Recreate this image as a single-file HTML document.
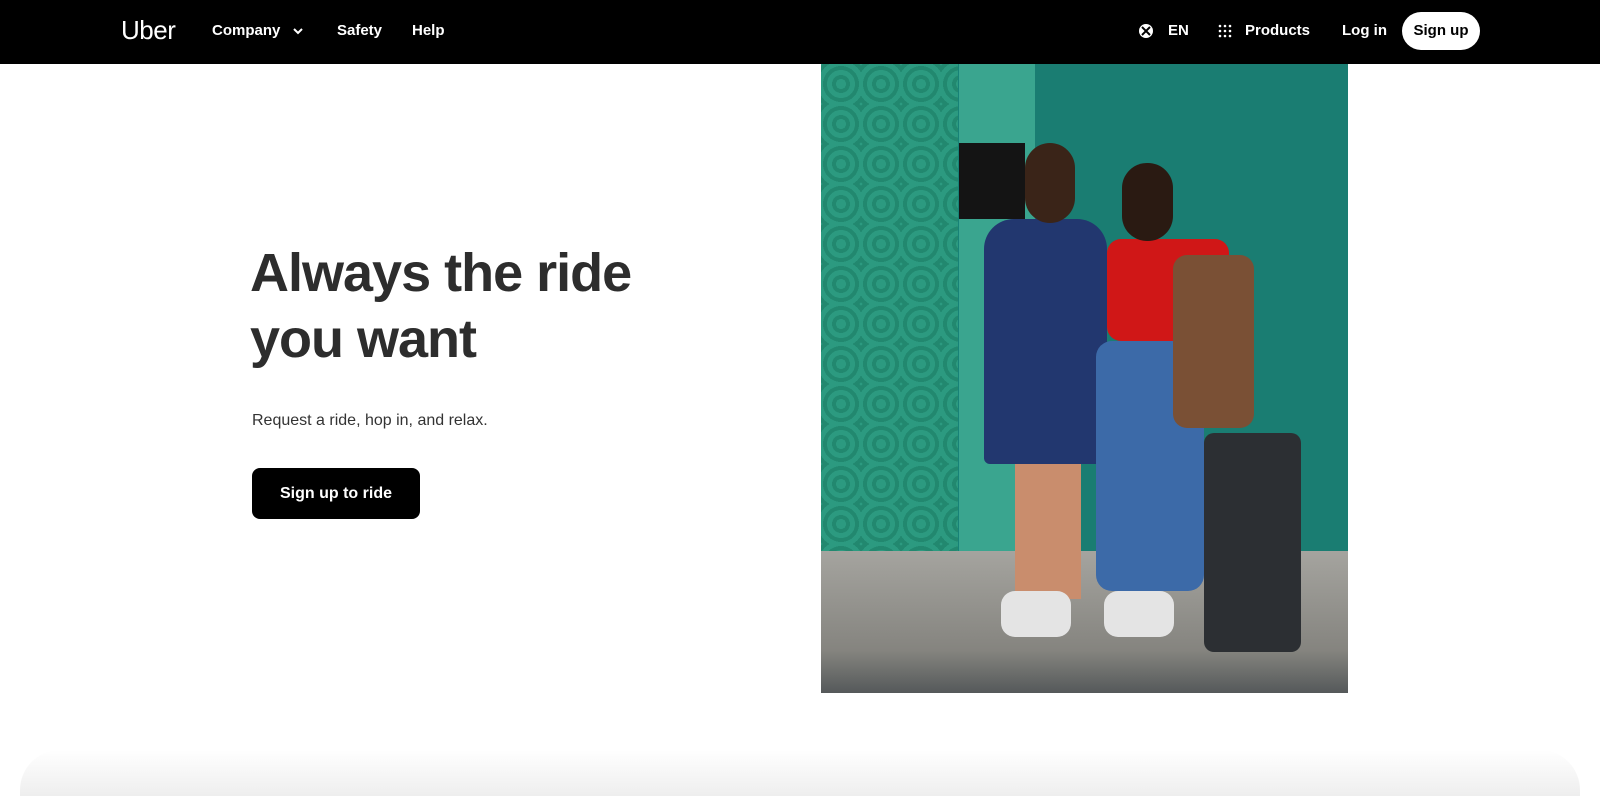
<!DOCTYPE html>
<html><head><meta charset="utf-8"><style>
*{margin:0;padding:0;box-sizing:border-box}
body{width:1600px;height:796px;overflow:hidden;background:#fff;font-family:"Liberation Sans",sans-serif;position:relative}
nav{position:absolute;left:0;top:0;width:1600px;height:64px;background:#000;color:#fff}
nav span{position:absolute;top:22px;font-size:15px;font-weight:bold}
.logo{position:absolute;left:121px;top:15px;font-size:26px;color:#fff;letter-spacing:-0.5px}
.pill{position:absolute;left:1402px;top:12px;width:78px;height:38px;background:#fff;border-radius:19px;color:#000;font-size:15px;font-weight:bold;text-align:center;line-height:38px}
h1{position:absolute;left:250px;top:240px;font-size:54px;line-height:66px;color:#2d2d2d;font-weight:bold;letter-spacing:-1px}
p{position:absolute;left:252px;top:412px;font-size:16px;color:#333}
.btn{position:absolute;left:252px;top:468px;width:168px;height:51px;background:#000;border-radius:8px;color:#fff;font-weight:bold;font-size:16px;text-align:center;line-height:51px}
.img{position:absolute;left:821px;top:64px;width:527px;height:629px;overflow:hidden;background:#178277}
.img div{position:absolute}
.shadow{position:absolute;left:20px;right:20px;top:750px;height:46px;background:linear-gradient(#fff,#eee);border-radius:40px 40px 0 0}
</style></head><body>
<nav>
<div class="logo">Uber</div>
<span style="left:212px">Company</span>
<svg style="position:absolute;left:292px;top:27px" width="12" height="8" viewBox="0 0 12 8"><path d="M2 2l4 4 4-4" stroke="#fff" stroke-width="2" fill="none"/></svg>
<span style="left:337px">Safety</span>
<span style="left:412px">Help</span>
<svg style="position:absolute;left:1138px;top:23px" width="16" height="16" viewBox="0 0 16 16"><circle cx="8" cy="8" r="7" fill="#fff"/><path d="M4 4l8 8M12 4l-8 8" stroke="#000" stroke-width="2"/></svg>
<span style="left:1168px">EN</span>
<svg style="position:absolute;left:1218px;top:24px" width="14" height="14" viewBox="0 0 14 14" fill="#fff"><circle cx="2" cy="2" r="1.3"/><circle cx="7" cy="2" r="1.3"/><circle cx="12" cy="2" r="1.3"/><circle cx="2" cy="7" r="1.3"/><circle cx="7" cy="7" r="1.3"/><circle cx="12" cy="7" r="1.3"/><circle cx="2" cy="12" r="1.3"/><circle cx="7" cy="12" r="1.3"/><circle cx="12" cy="12" r="1.3"/></svg>
<span style="left:1245px">Products</span>
<span style="left:1342px">Log in</span>
<div class="pill">Sign up</div>
</nav>
<h1>Always the ride<br>you want</h1>
<p>Request a ride, hop in, and relax.</p>
<div class="btn">Sign up to ride</div>
<div class="img">
<div style="left:0;top:0;width:137px;height:487px;background:repeating-radial-gradient(circle at 20px 20px,#2c9a80 0 5px,#22886f 5px 9px);background-size:40px 40px"></div>
<div style="left:138px;top:0;width:76px;height:487px;background:#3aa58f"></div>
<div style="left:214px;top:0;width:313px;height:487px;background:#1a7d72"></div>
<div style="left:138px;top:79px;width:66px;height:76px;background:#141414"></div>
<div style="left:0;top:487px;width:527px;height:142px;background:linear-gradient(#a5a49f,#85847f 70%,#55595a)"></div>
<div style="left:194px;top:400px;width:66px;height:135px;background:#c98d6d"></div>
<div style="left:163px;top:155px;width:123px;height:245px;background:#22376f;border-radius:30px 30px 6px 6px"></div>
<div style="left:204px;top:79px;width:50px;height:80px;background:#3a2418;border-radius:25px"></div>
<div style="left:275px;top:277px;width:108px;height:250px;background:#3c6aa8;border-radius:16px"></div>
<div style="left:286px;top:175px;width:122px;height:102px;background:#d01717;border-radius:14px"></div>
<div style="left:301px;top:99px;width:51px;height:78px;background:#2a1a12;border-radius:25px"></div>
<div style="left:352px;top:191px;width:81px;height:173px;background:#7a5035;border-radius:14px"></div>
<div style="left:383px;top:369px;width:97px;height:219px;background:#2c2f33;border-radius:10px"></div>
<div style="left:180px;top:527px;width:70px;height:46px;background:#e4e4e4;border-radius:14px"></div>
<div style="left:283px;top:527px;width:70px;height:46px;background:#e4e4e4;border-radius:14px"></div>
</div>
<div class="shadow"></div>
</body></html>
